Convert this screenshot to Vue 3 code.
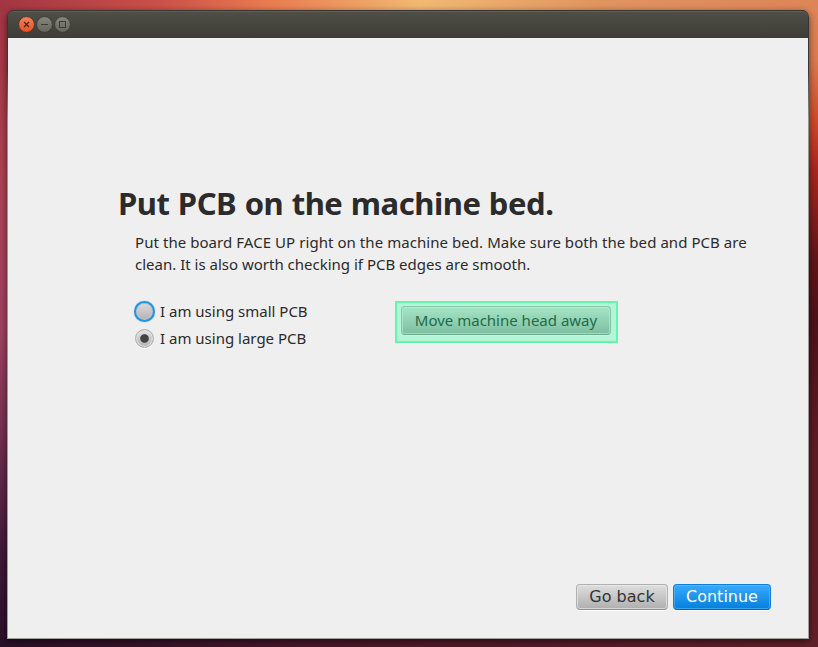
<script setup>
import { ref } from 'vue'

const size = ref('large')
const options = [
  { value: 'small', label: 'I am using small PCB', focused: true },
  { value: 'large', label: 'I am using large PCB', focused: false },
]
</script>

<template>
  <div class="desktop">
    <div class="window">
      <header class="titlebar">
        <svg class="control" viewBox="0 0 18 18">
          <defs>
            <linearGradient id="close" x1="0" y1="0" x2="0" y2="1">
              <stop offset="0" stop-color="#f5825c" />
              <stop offset="1" stop-color="#e8501d" />
            </linearGradient>
            <linearGradient id="plain" x1="0" y1="0" x2="0" y2="1">
              <stop offset="0" stop-color="#88867e" />
              <stop offset="1" stop-color="#65645d" />
            </linearGradient>
          </defs>
          <circle cx="8.5" cy="8.5" r="7.9" fill="url(#close)" stroke="#35342f" stroke-width=".8" />
          <path d="M6 6l5 5M11 6l-5 5" stroke="#45251a" stroke-width="1.2" />
        </svg>
        <svg class="control" viewBox="0 0 18 18">
          <circle cx="8.5" cy="8.5" r="7.9" fill="url(#plain)" stroke="#35342f" stroke-width=".8" />
          <path d="M5 8.5h7" stroke="#3b3a35" />
        </svg>
        <svg class="control" viewBox="0 0 18 18">
          <circle cx="8.5" cy="8.5" r="7.9" fill="url(#plain)" stroke="#35342f" stroke-width=".8" />
          <path d="M5.5 5.5h6v6h-6z" fill="none" stroke="#3b3a35" />
        </svg>
      </header>
      <main class="content">
        <h1>Put PCB on the machine bed.</h1>
        <p><span class="lead">Put the board FACE UP right on the machine bed. Make sure both the bed and PCB are</span><br>clean. It is also worth checking if PCB edges are smooth.</p>
        <div class="choices">
          <div class="radios">
            <div v-for="o in options" :key="o.value" class="radio" @click="size = o.value">
              <span class="dot" :class="{ focused: o.focused, on: size === o.value }"></span>
              <span class="radio-label">{{ o.label }}</span>
            </div>
          </div>
          <div class="highlight"><button class="move">Move machine head away</button></div>
        </div>
        <footer>
          <button class="nav back">Go back</button>
          <button class="nav next">Continue</button>
        </footer>
      </main>
    </div>
  </div>
</template>

<style>
body { overflow: hidden; }
</style>

<style scoped>
* { box-sizing: border-box; }
.desktop {
  width: 818px;
  height: 647px;
  padding: 10px 9px 8px 7px;
  background:
    linear-gradient(90deg, #a33543 0, #ca5149 160px, #e97c50 270px, #f2b974 420px, #e09460 600px, #dd8558 100%) 0 0 / 100% 12px no-repeat,
    linear-gradient(90deg, #2a1028, #4c1828 45%, #601f28) 0 100% / 100% 10px no-repeat,
    linear-gradient(180deg, #a33543 0, #ac4353 180px, #a14161 330px, #763052 430px, #401a38 550px, #2a1028 100%) 0 0 / 20px 100% no-repeat,
    linear-gradient(180deg, #dd8558 0, #dc7b4e 60px, #cc4a2c 120px, #a8261f 170px, #601519 260px, #4c1219 320px, #5c1c26 450px, #601f28 100%) 100% 0 / 20px 100% no-repeat;
  font-family: "Noto Sans", "Open Sans", sans-serif;
  color: #2b2b2b;
}
.window {
  width: 802px;
  height: 629px;
  display: flex;
  flex-direction: column;
  padding: 0 1px 1px;
  border-radius: 7px 7px 0 0;
  background: linear-gradient(#34332f 0, #3a3935 60px, #96948f 110px, #a3a09c 100%);
  box-shadow: 0 2px 7px rgba(0, 0, 0, 0.55);
}
.titlebar {
  height: 28px;
  flex: none;
  display: flex;
  align-items: center;
  padding: 0 10px;
  border-radius: 6px 6px 0 0;
  background: linear-gradient(#504f47, #3d3c37);
  border-top: 1px solid #383733;
  box-shadow: inset 0 1px #605f57;
}
.control { width: 18px; height: 18px; display: block; }
.content {
  flex: 1;
  display: flex;
  flex-direction: column;
  background: #efefef;
  padding: 142px 37px 28px 109px;
}
h1 {
  margin: 0;
  padding-left: 1px;
  font-size: 31px;
  line-height: 46px;
  font-weight: 700;
  letter-spacing: -0.46px;
  word-spacing: 0.8px;
  white-space: nowrap;
}
p {
  margin: 5px 0 0 18px;
  font-size: 15px;
  line-height: 22px;
  white-space: nowrap;
}
.lead { letter-spacing: 0.06px; }
.choices { display: flex; margin: 22px 0 0 16px; }
.radios { width: 262px; display: flex; flex-direction: column; }
.radio { height: 27px; display: flex; align-items: center; gap: 5px; font-size: 15px; }
.radio-label { white-space: nowrap; }
.dot {
  width: 19px;
  height: 19px;
  margin: 1px 1px 0 2px;
  flex: none;
  border-radius: 50%;
  border: 1px solid #adadad;
  background: linear-gradient(#e4e4e4, #b3b3b3);
  box-shadow: inset 0 0 0 1px #e0e0e0, 0 1px #fff;
}
.dot.focused {
  width: 21px;
  height: 21px;
  margin: 1px 0 0 1px;
  border: 2px solid #1e93e8;
  background: linear-gradient(#dcdcdc, #b3b3b3);
  box-shadow: inset 0 0 0 1px #c4c4c4, 0 0 1px #1e93e8;
}
.dot.on {
  background: radial-gradient(circle, #444 0 3.8px, transparent 4.8px), linear-gradient(#e4e4e4, #b3b3b3);
}
button { font-family: inherit; padding: 0; margin: 0; white-space: nowrap; }
.highlight {
  width: 223px;
  height: 42px;
  margin-top: 4px;
  padding: 3px 5px 6px 4px;
  background: #b5f4d7;
  border: 2px solid #66f5ac;
}
.move {
  display: block;
  width: 210px;
  height: 29px;
  border: 1px solid #7fc9a5;
  border-bottom-color: #6dac8d;
  border-radius: 4px;
  background: linear-gradient(#a5e5c6, #7fbfa1);
  box-shadow: inset 0 0 0 1px rgba(190, 245, 218, 0.5), 0 1px #c3f8df;
  color: #226b48;
  font-size: 15px;
  line-height: 25px;
}
footer { display: flex; justify-content: flex-end; gap: 5px; margin-top: auto; }
.nav {
  height: 26px;
  border-radius: 4px;
  font: 16px/22px "DejaVu Sans", sans-serif;
}
.back {
  width: 92px;
  border: 1px solid #b0b0b0;
  border-bottom-color: #8f8f8f;
  background: linear-gradient(#dedede, #afafaf);
  box-shadow: inset 0 0 0 1px rgba(240, 240, 240, 0.6), 0 1px #fff;
  color: #333;
}
.next {
  width: 98px;
  border: 1px solid #0d7fd9;
  border-bottom-color: #0068b8;
  background: linear-gradient(#3aa9fc, #0380dc);
  box-shadow: inset 0 0 0 1px rgba(110, 195, 255, 0.5), 0 1px #fff;
  color: #fff;
}
</style>
